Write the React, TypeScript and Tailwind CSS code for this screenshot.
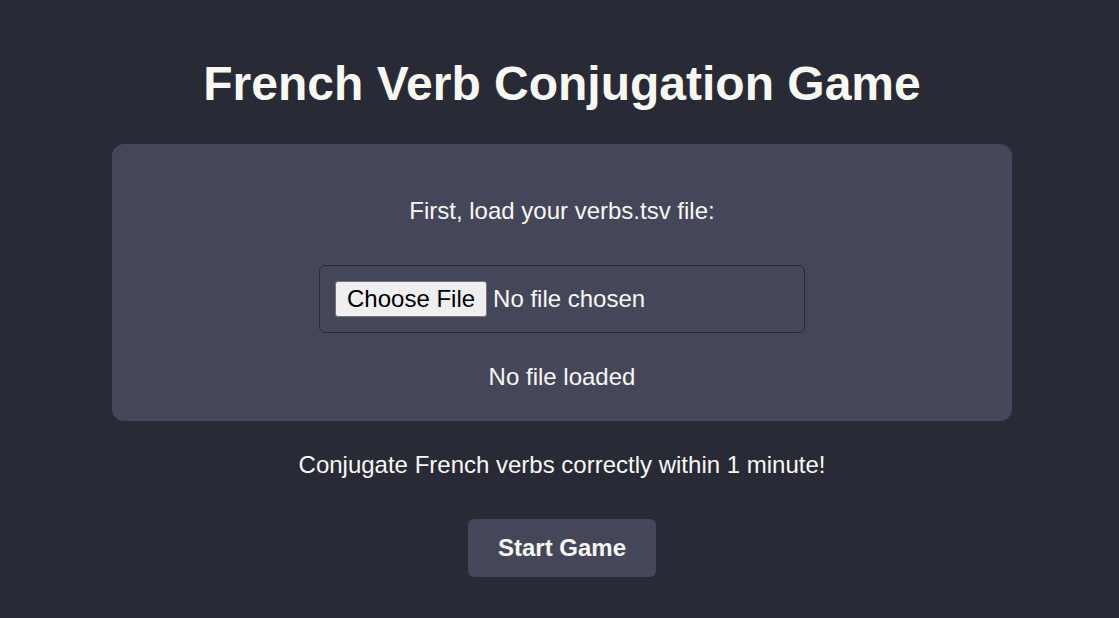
export default function App() {
  return (
    <div
      className="min-h-[618px] bg-[#282a36] text-[#f8f8f2] flex flex-col items-center pt-[56px] pl-[5px]"
      style={{ fontFamily: '"Liberation Sans", Arial, sans-serif' }}
    >
      <h1 className="text-[48px] leading-[55px] font-bold">French Verb Conjugation Game</h1>

      <div className="mt-[33px] w-[900px] rounded-[12px] bg-[#44475a] flex flex-col items-center pt-[53px] pb-[30px]">
        <p className="text-[24px] leading-[28px]">First, load your verbs.tsv file:</p>
        <input
          type="file"
          accept=".tsv"
          className="mt-[40px] w-[486px] rounded-[6px] border border-[#282a36] p-[15px] text-[24px] leading-[28px] text-[#f8f8f2] file:mr-[6px] file:rounded-[3px] file:border file:border-[#767676] file:bg-[#efefef] file:px-[11px] file:py-[3px] file:text-black"
        />
        <p className="mt-[30px] text-[24px] leading-[28px]">No file loaded</p>
      </div>

      <p className="mt-[30px] text-[24px] leading-[28px]">Conjugate French verbs correctly within 1 minute!</p>

      <button className="mt-[40px] h-[58px] w-[188px] rounded-[6px] bg-[#44475a] text-[24px] font-bold text-[#f8f8f2]">
        Start Game
      </button>
    </div>
  )
}
